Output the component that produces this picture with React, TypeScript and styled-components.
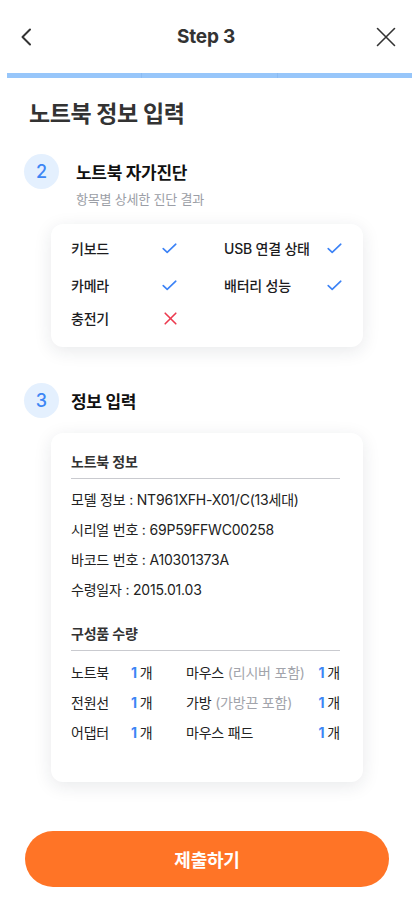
import React from 'react';
import styled, { createGlobalStyle } from 'styled-components';

const GlobalStyle = createGlobalStyle`
    * {
        box-sizing: border-box;
    }
    body {
        margin: 0;
        background: #ffffff;
        font-family: 'Inter', 'Noto Sans CJK KR', sans-serif;
        color: #222222;
    }
`;

type checkItem = {
    label: string;
    ok: boolean;
};

type partItem = {
    name: string;
    note?: string;
    count: number;
};

const checks: checkItem[] = [
    { label: '키보드', ok: true },
    { label: 'USB 연결 상태', ok: true },
    { label: '카메라', ok: true },
    { label: '배터리 성능', ok: true },
    { label: '충전기', ok: false },
];

const infos = [
    '모델 정보 : NT961XFH-X01/C(13세대)',
    '시리얼 번호 : 69P59FFWC00258',
    '바코드 번호 : A10301373A',
    '수령일자 : 2015.01.03',
];

const parts: [partItem, partItem][] = [
    [
        { name: '노트북', count: 1 },
        { name: '마우스', note: '(리시버 포함)', count: 1 },
    ],
    [
        { name: '전원선', count: 1 },
        { name: '가방', note: '(가방끈 포함)', count: 1 },
    ],
    [
        { name: '어댑터', count: 1 },
        { name: '마우스 패드', count: 1 },
    ],
];

const CheckIcon = () => (
    <svg width="15" height="11" viewBox="0 0 15 11" fill="none">
        <polyline
            points="1.2,5.6 5.2,9.4 13.8,1.2"
            stroke="#3b82f6"
            strokeWidth="1.6"
            strokeLinecap="round"
            strokeLinejoin="round"
        />
    </svg>
);

const FailIcon = () => (
    <svg width="13" height="13" viewBox="0 0 13 13" fill="none">
        <path
            d="M1.2 1.2 L11.8 11.8 M11.8 1.2 L1.2 11.8"
            stroke="#ec3a4e"
            strokeWidth="1.6"
            strokeLinecap="round"
        />
    </svg>
);

const App: React.FC = () => {
    return (
        <>
            <GlobalStyle />
            <Page>
                <Header>
                    <IconButton aria-label="back">
                        <svg width="12" height="18" viewBox="0 0 12 18" fill="none">
                            <path
                                d="M10 1.5 L2.5 9 L10 16.5"
                                stroke="#333333"
                                strokeWidth="2"
                                strokeLinecap="round"
                                strokeLinejoin="round"
                            />
                        </svg>
                    </IconButton>
                    <HeaderTitle>Step 3</HeaderTitle>
                    <IconButton aria-label="close">
                        <svg width="20" height="20" viewBox="0 0 20 20" fill="none">
                            <path
                                d="M1.5 1.5 L18.5 18.5 M18.5 1.5 L1.5 18.5"
                                stroke="#333333"
                                strokeWidth="1.6"
                                strokeLinecap="round"
                            />
                        </svg>
                    </IconButton>
                </Header>

                <Progress>
                    <ProgressSegment />
                    <ProgressSegment />
                    <ProgressSegment />
                </Progress>

                <PageTitle>노트북 정보 입력</PageTitle>

                <SectionHead>
                    <StepBadge>2</StepBadge>
                    <SectionText $indent={6}>
                        <SectionTitle>노트북 자가진단</SectionTitle>
                    </SectionText>
                </SectionHead>
                <SectionSub>항목별 상세한 진단 결과</SectionSub>

                <Card>
                    <CheckGrid>
                        {checks.map((c) => (
                            <CheckCell key={c.label}>
                                <CheckLabel>{c.label}</CheckLabel>
                                {c.ok ? <CheckIcon /> : <FailIcon />}
                            </CheckCell>
                        ))}
                    </CheckGrid>
                </Card>

                <SectionHead $top={36}>
                    <StepBadge>3</StepBadge>
                    <SectionText $indent={1}>
                        <SectionTitle>정보 입력</SectionTitle>
                    </SectionText>
                </SectionHead>

                <InfoCard>
                    <GroupTitle>노트북 정보</GroupTitle>
                    <InfoList>
                        {infos.map((line) => (
                            <InfoLine key={line}>{line}</InfoLine>
                        ))}
                    </InfoList>

                    <GroupTitle $top={20}>구성품 수량</GroupTitle>
                    <PartGrid>
                        {parts.map(([left, right]) => (
                            <React.Fragment key={left.name}>
                                <PartName>{left.name}</PartName>
                                <Qty>
                                    <QtyNum>{left.count}</QtyNum>개
                                </Qty>
                                <PartName>
                                    {right.name}
                                    {right.note && <PartNote> {right.note}</PartNote>}
                                </PartName>
                                <Qty>
                                    <QtyNum>{right.count}</QtyNum>개
                                </Qty>
                            </React.Fragment>
                        ))}
                    </PartGrid>
                </InfoCard>

                <SubmitButton>제출하기</SubmitButton>
            </Page>
        </>
    );
};

export default App;

const Page = styled.div`
    width: 412px;
    min-height: 917px;
    display: flex;
    flex-direction: column;
    padding-bottom: 30px;
`;

const Header = styled.div`
    height: 73px;
    padding: 0 14px 0 14px;
    display: flex;
    align-items: center;
    justify-content: space-between;
`;

const IconButton = styled.button`
    width: 24px;
    height: 24px;
    padding: 0;
    border: none;
    background: none;
    display: flex;
    align-items: center;
    justify-content: center;
`;

const HeaderTitle = styled.h1`
    margin: 0;
    font-size: 19px;
    font-weight: 700;
    color: #333333;
    letter-spacing: -0.2px;
`;

const Progress = styled.div`
    margin-left: 7px;
    height: 5px;
    display: flex;
    gap: 1px;
    background: #8bbcf4;
`;

const ProgressSegment = styled.div`
    flex: 1;
    background: #97c6fa;
`;

const PageTitle = styled.h2`
    margin: 22px 0 0 29px;
    font-size: 23px;
    line-height: 28px;
    font-weight: 700;
    color: #333333;
    letter-spacing: -0.4px;
`;

const SectionHead = styled.div<{ $top?: number }>`
    margin: ${(p) => p.$top ?? 26}px 0 0 24px;
    display: flex;
    align-items: center;
`;

const StepBadge = styled.div`
    width: 35px;
    height: 35px;
    border-radius: 50%;
    background: #e4f0fe;
    color: #3d86f5;
    font-size: 18px;
    font-weight: 500;
    display: flex;
    align-items: center;
    justify-content: center;
`;

const SectionText = styled.div<{ $indent: number }>`
    margin-left: ${(p) => 11 + p.$indent}px;
`;

const SectionTitle = styled.h3`
    margin: 0;
    font-size: 17px;
    font-weight: 700;
    color: #111111;
    letter-spacing: -0.3px;
`;

const SectionSub = styled.p`
    margin: 0 0 0 76px;
    font-size: 13px;
    line-height: 20px;
    color: #9b9ea6;
    letter-spacing: -0.2px;
`;

const Card = styled.div`
    margin: 15px 0 0 51px;
    width: 312px;
    border-radius: 12px;
    background: #ffffff;
    box-shadow: 0 4px 18px rgba(30, 40, 60, 0.1);
`;

const CheckGrid = styled.div`
    padding: 14px 21px 19px 20px;
    display: grid;
    grid-template-columns: 106px 1fr;
    grid-template-rows: 37px 33px 20px;
    column-gap: 47px;
    align-items: start;
`;

const CheckCell = styled.div`
    height: 20px;
    display: flex;
    align-items: center;
    justify-content: space-between;
`;

const CheckLabel = styled.span`
    font-size: 14px;
    font-weight: 500;
    color: #1c1c1e;
    letter-spacing: -0.2px;
`;

const InfoCard = styled(Card)`
    margin-top: 15px;
    padding: 19px 23px 35px 20px;
`;

const GroupTitle = styled.div<{ $top?: number }>`
    margin-top: ${(p) => p.$top ?? 0}px;
    padding-bottom: 6px;
    border-bottom: 1px solid #c9cacf;
    font-size: 14px;
    line-height: 20px;
    font-weight: 600;
    color: #333333;
    letter-spacing: -0.2px;
`;

const InfoList = styled.div`
    padding-top: 5px;
    display: flex;
    flex-direction: column;
`;

const InfoLine = styled.div`
    height: 30px;
    display: flex;
    align-items: center;
    font-size: 14px;
    color: #222222;
    letter-spacing: -0.2px;
`;

const PartGrid = styled.div`
    padding-top: 6px;
    display: grid;
    grid-template-columns: 60px 55px 1fr auto;
    grid-auto-rows: 30px;
    align-items: center;
    font-size: 14px;
    color: #222222;
    letter-spacing: -0.2px;
`;

const PartName = styled.span`
    white-space: nowrap;
`;

const PartNote = styled.span`
    color: #a2a4ab;
`;

const Qty = styled.span`
    white-space: nowrap;
`;

const QtyNum = styled.span`
    color: #3d86f5;
    font-weight: 700;
    margin-right: 3px;
`;

const SubmitButton = styled.button`
    margin: 49px 0 0 25px;
    width: 364px;
    height: 56px;
    border: none;
    border-radius: 28px;
    background: #ff7426;
    color: #ffffff;
    font-family: inherit;
    font-size: 18px;
    font-weight: 700;
    letter-spacing: -0.2px;
`;
